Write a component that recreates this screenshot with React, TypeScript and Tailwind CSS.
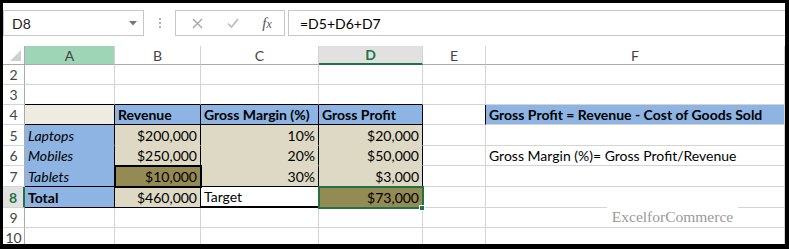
const FONT = { fontFamily: "Lato, 'Open Sans', sans-serif" };

type CellProps = {
  text?: string;
  bg?: string;
  r?: string;
  b?: string;
  right?: boolean;
  bold?: boolean;
  italic?: boolean;
  extra?: string;
  children?: React.ReactNode;
};

function Cell({
  text,
  bg = "bg-white",
  r = "border-r-[#d4d4d4]",
  b = "border-b-[#d4d4d4]",
  right,
  bold,
  italic,
  extra = "",
  children,
}: CellProps) {
  return (
    <div
      className={`flex items-end whitespace-nowrap border-r border-b px-[3px] pb-[1px] text-[14px] leading-[17px] text-black ${bg} ${r} ${b} ${
        right ? "justify-end" : "justify-start"
      } ${bold ? "font-bold" : ""} ${italic ? "italic" : ""} ${extra}`}
    >
      {text}
      {children}
    </div>
  );
}

function RowHead({ n, active }: { n: number; active?: boolean }) {
  return (
    <div
      className={`flex items-center justify-center border-b border-b-[#d4d4d4] text-[14px] ${
        active
          ? "border-r-2 border-r-[#217346] bg-[#e1e1e1] font-bold text-[#217346]"
          : "border-r border-r-[#ababab] bg-white text-[#444]"
      }`}
    >
      {n}
    </div>
  );
}

function ColHead({ label, kind }: { label: string; kind?: "green" | "active" }) {
  const k =
    kind === "green"
      ? "bg-[#9fd5b7] text-[#444] border-b border-b-[#ababab]"
      : kind === "active"
      ? "bg-[#e1e1e1] text-[#217346] font-bold border-b-2 border-b-[#217346]"
      : "bg-white text-[#444] border-b border-b-[#ababab]";
  return (
    <div
      className={`flex items-center justify-center border-r border-r-[#d4d4d4] text-[14px] ${k}`}
    >
      {label}
    </div>
  );
}

const BLUE = "bg-[#8db4e2]";
const BEIGE = "bg-[#ddd9c4]";
const OLIVE = "bg-[#948a54]";

export default function App() {
  return (
    <div className="h-[249px] w-[789px] overflow-hidden bg-black pt-[3px] pl-[3px]" style={FONT}>
      <div className="flex h-[241px] w-[782px] flex-col overflow-hidden bg-white">
        {/* formula bar */}
        <div className="flex h-[43px] items-start pt-[7px]">
          <div className="flex h-[26px] w-[141px] items-center justify-between border border-[#c6c6c6] pl-[8px] pr-[6px] text-[14px] text-[#222]">
            <span>D8</span>
            <svg width="8" height="5" viewBox="0 0 8 5">
              <path d="M0 0h8L4 4.5z" fill="#777" />
            </svg>
          </div>
          <div className="flex h-[26px] w-[31px] flex-col items-center justify-center gap-[2px]">
            <span className="h-[2px] w-[2px] bg-[#b0b0b0]" />
            <span className="h-[2px] w-[2px] bg-[#b0b0b0]" />
            <span className="h-[2px] w-[2px] bg-[#b0b0b0]" />
          </div>
          <div className="flex h-[26px] w-[110px] items-center border border-[#c6c6c6]">
            <div className="flex w-[38px] justify-center pl-[4px]">
              <svg width="11" height="11" viewBox="0 0 11 11">
                <path d="M1 1l9 9M10 1l-9 9" stroke="#a6a6a6" strokeWidth="1.4" />
              </svg>
            </div>
            <div className="flex w-[38px] justify-center">
              <svg width="12" height="10" viewBox="0 0 12 10">
                <path d="M1 5.5l3.5 3.5L11 1" stroke="#b8b8b8" strokeWidth="1.5" fill="none" />
              </svg>
            </div>
            <div
              className="flex w-[30px] items-baseline justify-center text-[15px] italic leading-none text-[#555]"
              style={{ fontFamily: "'Liberation Serif', serif" }}
            >
              <span>f</span>
              <span className="text-[12px]">x</span>
            </div>
          </div>
          <div className="ml-[3px] flex h-[26px] flex-1 items-center border-y border-l border-[#c6c6c6] pl-[11px] text-[14px] text-black">
            =D5+D6+D7
          </div>
        </div>

        {/* grid */}
        <div className="relative grid flex-1 grid-cols-[22px_90px_86px_118px_104px_63px_299px] grid-rows-[19px_20px_20px_20px_21px_20px_21px_21px_20px_20px] overflow-hidden">
          {/* header row */}
          <div className="relative border-r border-b border-r-[#ababab] border-b-[#ababab] bg-white">
            <svg className="absolute right-[3px] bottom-[3px]" width="11" height="11" viewBox="0 0 11 11">
              <path d="M11 0v11H0z" fill="#d0d0d0" />
            </svg>
          </div>
          <ColHead label="A" kind="green" />
          <ColHead label="B" />
          <ColHead label="C" />
          <ColHead label="D" kind="active" />
          <ColHead label="E" />
          <ColHead label="F" />

          {/* row 2 */}
          <RowHead n={2} />
          <Cell />
          <Cell />
          <Cell />
          <Cell />
          <Cell />
          <Cell />

          {/* row 3 */}
          <RowHead n={3} />
          <Cell b="border-b-black" />
          <Cell b="border-b-black" />
          <Cell b="border-b-black" />
          <Cell b="border-b-black" />
          <Cell />
          <Cell />

          {/* row 4 */}
          <RowHead n={4} />
          <Cell bg="bg-[#eeece1]" r="border-r-black" b="border-b-black" />
          <Cell text="Revenue" bg={BLUE} bold r="border-r-black" b="border-b-black" />
          <Cell text="Gross Margin (%)" bg={BLUE} bold r="border-r-black" b="border-b-black" />
          <Cell text="Gross Profit" bg={BLUE} bold r="border-r-black" b="border-b-black" />
          <Cell r="border-r-black" />
          <Cell text="Gross Profit = Revenue - Cost of Goods Sold" bg={BLUE} bold />

          {/* row 5 */}
          <RowHead n={5} />
          <Cell text="Laptops" bg={BLUE} italic r="border-r-black" b="border-b-[#8db4e2]" />
          <Cell text="$200,000" bg={BEIGE} right r="border-r-black" b="border-b-[#ddd9c4]" />
          <Cell text="10%" bg={BEIGE} right r="border-r-black" b="border-b-[#ddd9c4]" />
          <Cell text="$20,000" bg={BEIGE} right r="border-r-black" b="border-b-[#ddd9c4]" />
          <Cell />
          <Cell />

          {/* row 6 */}
          <RowHead n={6} />
          <Cell text="Mobiles" bg={BLUE} italic r="border-r-black" b="border-b-[#8db4e2]" />
          <Cell text="$250,000" bg={BEIGE} right r="border-r-black" b="border-b-black" />
          <Cell text="20%" bg={BEIGE} right r="border-r-black" b="border-b-[#ddd9c4]" />
          <Cell text="$50,000" bg={BEIGE} right r="border-r-black" b="border-b-[#ddd9c4]" />
          <Cell />
          <Cell text="Gross Margin (%)= Gross Profit/Revenue" />

          {/* row 7 */}
          <RowHead n={7} />
          <Cell text="Tablets" bg={BLUE} italic r="border-r-black" b="border-b-black" />
          <Cell
            text="$10,000"
            bg={OLIVE}
            right
            r="border-r-black"
            b="border-b-black"
            extra="relative z-10 outline-2 -outline-offset-1 outline-black"
          />
          <Cell text="30%" bg={BEIGE} right r="border-r-black" b="border-b-black" />
          <Cell text="$3,000" bg={BEIGE} right r="border-r-black" b="border-b-black" />
          <Cell />
          <Cell />

          {/* row 8 */}
          <RowHead n={8} active />
          <Cell text="Total" bg={BLUE} bold r="border-r-black" b="border-b-black" />
          <Cell text="$460,000" bg={BEIGE} right r="border-r-black" b="border-b-black" />
          <Cell text="Target" r="border-r-black" b="border-b-black" extra="border-b-2" />
          <Cell
            text="$73,000"
            bg={OLIVE}
            right
            r="border-r-black"
            b="border-b-black"
            extra="relative z-10 outline-2 -outline-offset-1 outline-[#217346]"
          >
            <span className="absolute right-[-3px] bottom-[-4px] h-[6px] w-[6px] border border-white bg-[#217346]" />
          </Cell>
          <Cell />
          <Cell />

          {/* row 9 */}
          <RowHead n={9} />
          <Cell />
          <Cell />
          <Cell />
          <Cell />
          <Cell />
          <Cell />

          {/* row 10 */}
          <RowHead n={10} />
          <Cell />
          <Cell />
          <Cell />
          <Cell />
          <Cell />
          <Cell />

          {/* watermark */}
          <div
            className="absolute top-[160px] left-[604px] flex h-[21px] w-[131px] items-center justify-center bg-white text-[15.5px] text-[#9a9a9a]"
            style={{ fontFamily: "'Liberation Serif', serif" }}
          >
            ExcelforCommerce
          </div>
        </div>
      </div>
    </div>
  );
}
